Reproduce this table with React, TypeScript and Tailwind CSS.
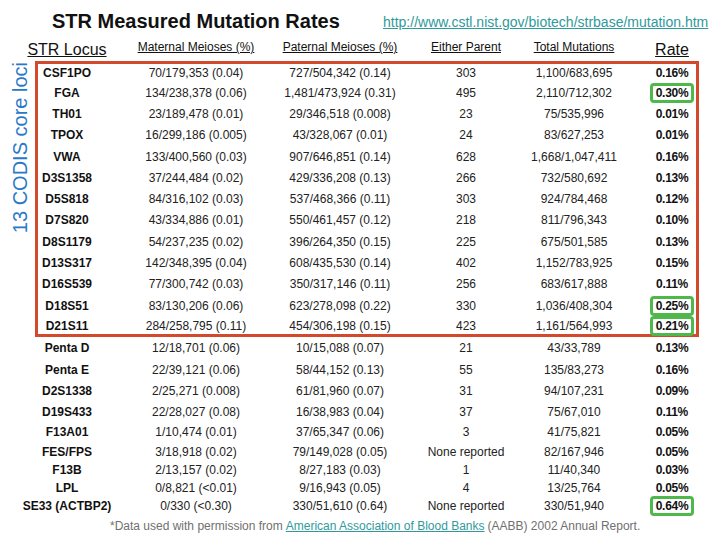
import React from "react";

type Row = {
  locus: string;
  mat: string;
  pat: string;
  either: string;
  total: string;
  rate: string;
  hl?: boolean;
  h: string;
};

const boxed: Row[] = [
  { locus: "CSF1PO", mat: "70/179,353 (0.04)", pat: "727/504,342 (0.14)", either: "303", total: "1,100/683,695", rate: "0.16%", h: "h-[18px]" },
  { locus: "FGA", mat: "134/238,378 (0.06)", pat: "1,481/473,924 (0.31)", either: "495", total: "2,110/712,302", rate: "0.30%", hl: true, h: "h-[21.3px]" },
  { locus: "TH01", mat: "23/189,478 (0.01)", pat: "29/346,518 (0.008)", either: "23", total: "75/535,996", rate: "0.01%", h: "h-[21.3px]" },
  { locus: "TPOX", mat: "16/299,186 (0.005)", pat: "43/328,067 (0.01)", either: "24", total: "83/627,253", rate: "0.01%", h: "h-[21.3px]" },
  { locus: "VWA", mat: "133/400,560 (0.03)", pat: "907/646,851 (0.14)", either: "628", total: "1,668/1,047,411", rate: "0.16%", h: "h-[21.3px]" },
  { locus: "D3S1358", mat: "37/244,484 (0.02)", pat: "429/336,208 (0.13)", either: "266", total: "732/580,692", rate: "0.13%", h: "h-[21.3px]" },
  { locus: "D5S818", mat: "84/316,102 (0.03)", pat: "537/468,366 (0.11)", either: "303", total: "924/784,468", rate: "0.12%", h: "h-[21.3px]" },
  { locus: "D7S820", mat: "43/334,886 (0.01)", pat: "550/461,457 (0.12)", either: "218", total: "811/796,343", rate: "0.10%", h: "h-[21.3px]" },
  { locus: "D8S1179", mat: "54/237,235 (0.02)", pat: "396/264,350 (0.15)", either: "225", total: "675/501,585", rate: "0.13%", h: "h-[21.3px]" },
  { locus: "D13S317", mat: "142/348,395 (0.04)", pat: "608/435,530 (0.14)", either: "402", total: "1,152/783,925", rate: "0.15%", h: "h-[21.3px]" },
  { locus: "D16S539", mat: "77/300,742 (0.03)", pat: "350/317,146 (0.11)", either: "256", total: "683/617,888", rate: "0.11%", h: "h-[21.3px]" },
  { locus: "D18S51", mat: "83/130,206 (0.06)", pat: "623/278,098 (0.22)", either: "330", total: "1,036/408,304", rate: "0.25%", hl: true, h: "h-[21.3px]" },
  { locus: "D21S11", mat: "284/258,795 (0.11)", pat: "454/306,198 (0.15)", either: "423", total: "1,161/564,993", rate: "0.21%", hl: true, h: "h-[18px]" },
];

const rest: Row[] = [
  { locus: "Penta D", mat: "12/18,701 (0.06)", pat: "10/15,088 (0.07)", either: "21", total: "43/33,789", rate: "0.13%", h: "h-[22px]" },
  { locus: "Penta E", mat: "22/39,121 (0.06)", pat: "58/44,152 (0.13)", either: "55", total: "135/83,273", rate: "0.16%", h: "h-[21px]" },
  { locus: "D2S1338", mat: "2/25,271 (0.008)", pat: "61/81,960 (0.07)", either: "31", total: "94/107,231", rate: "0.09%", h: "h-[21px]" },
  { locus: "D19S433", mat: "22/28,027 (0.08)", pat: "16/38,983 (0.04)", either: "37", total: "75/67,010", rate: "0.11%", h: "h-[21px]" },
  { locus: "F13A01", mat: "1/10,474 (0.01)", pat: "37/65,347 (0.06)", either: "3", total: "41/75,821", rate: "0.05%", h: "h-[20px]" },
  { locus: "FES/FPS", mat: "3/18,918 (0.02)", pat: "79/149,028 (0.05)", either: "None reported", total: "82/167,946", rate: "0.05%", h: "h-[19px]" },
  { locus: "F13B", mat: "2/13,157 (0.02)", pat: "8/27,183 (0.03)", either: "1", total: "11/40,340", rate: "0.03%", h: "h-[18px]" },
  { locus: "LPL", mat: "0/8,821 (<0.01)", pat: "9/16,943 (0.05)", either: "4", total: "13/25,764", rate: "0.05%", h: "h-[17px]" },
  { locus: "SE33 (ACTBP2)", mat: "0/330 (<0.30)", pat: "330/51,610 (0.64)", either: "None reported", total: "330/51,940", rate: "0.64%", hl: true, h: "h-[19px]" },
];

const grid = "grid grid-cols-[134px_124px_164px_88px_128px_68px]";
const cell = "flex items-center justify-center whitespace-nowrap";

function DataRow({ r }: { r: Row }) {
  return (
    <div className={`${grid} ${r.h} text-[12px] leading-[14px] text-[#222]`}>
      <div className={`${cell} font-bold text-[#111]`}>{r.locus}</div>
      <div className={cell}>{r.mat}</div>
      <div className={cell}>{r.pat}</div>
      <div className={cell}>{r.either}</div>
      <div className={cell}>{r.total}</div>
      <div className={cell}>
        {r.hl ? (
          <span className="flex items-center justify-center w-[44px] h-[20px] border-[3px] border-[#4fb84a] rounded-[4px] font-bold text-[#111] tracking-[-0.3px]">
            {r.rate}
          </span>
        ) : (
          <span className="font-bold text-[#111] tracking-[-0.3px]">{r.rate}</span>
        )}
      </div>
    </div>
  );
}

export default function App() {
  return (
    <div className="w-[720px] h-[540px] bg-white overflow-hidden font-['Liberation_Sans',Arial,sans-serif] text-[#111]">
      {/* title row */}
      <div className="flex h-[37px]">
        <div className="w-[383px] pl-[52px] pt-[11px]">
          <h1 className="text-[20px] leading-[20px] font-bold text-[#111]">STR Measured Mutation Rates</h1>
        </div>
        <div className="pt-[10px]">
          <span className="text-[14px] leading-[14px] text-[#2f9a9c] underline">
            http://www.cstl.nist.gov/biotech/strbase/mutation.htm
          </span>
        </div>
      </div>

      {/* column headers */}
      <div className={`${grid} h-[24px] items-start text-[12px] leading-[14px] text-[#111]`}>
        <div className="flex justify-center pt-[4px]">
          <span className="text-[16px] leading-[18px] underline">STR Locus</span>
        </div>
        <div className="flex justify-center pt-[3px] whitespace-nowrap"><span className="underline">Maternal Meioses (%)</span></div>
        <div className="flex justify-center pt-[3px] whitespace-nowrap"><span className="underline">Paternal Meioses (%)</span></div>
        <div className="flex justify-center pt-[3px] whitespace-nowrap"><span className="underline">Either Parent</span></div>
        <div className="flex justify-center pt-[3px] whitespace-nowrap"><span className="underline">Total Mutations</span></div>
        <div className="flex justify-center pt-[4px]">
          <span className="text-[16px] leading-[18px] underline">Rate</span>
        </div>
      </div>

      {/* boxed CODIS loci */}
      <div className="flex">
        <div className="w-[35px] pl-[9px] pt-[1px]">
          <span className="block [writing-mode:vertical-rl] rotate-180 text-[20px] leading-[22px] text-[#2a78c8] whitespace-nowrap">
            13 CODIS core loci
          </span>
        </div>
        <div className="w-[664px] border-[3px] border-[#d24a2b]">
          <div className="-ml-[38px]">
            {boxed.map((r) => (
              <DataRow key={r.locus} r={r} />
            ))}
          </div>
        </div>
      </div>

      {/* other loci */}
      <div>
        {rest.map((r) => (
          <DataRow key={r.locus} r={r} />
        ))}
      </div>

      {/* footnote */}
      <div className="h-[22px] flex items-center pl-[110px] text-[12px] leading-[14px] text-[#707070] whitespace-nowrap">
        *Data used with permission from{" "}
        <span className="ml-[3px] mr-[3px] text-[#2f9a9c] underline">American Association of Blood Banks</span>
        (AABB) 2002 Annual Report.
      </div>
    </div>
  );
}
